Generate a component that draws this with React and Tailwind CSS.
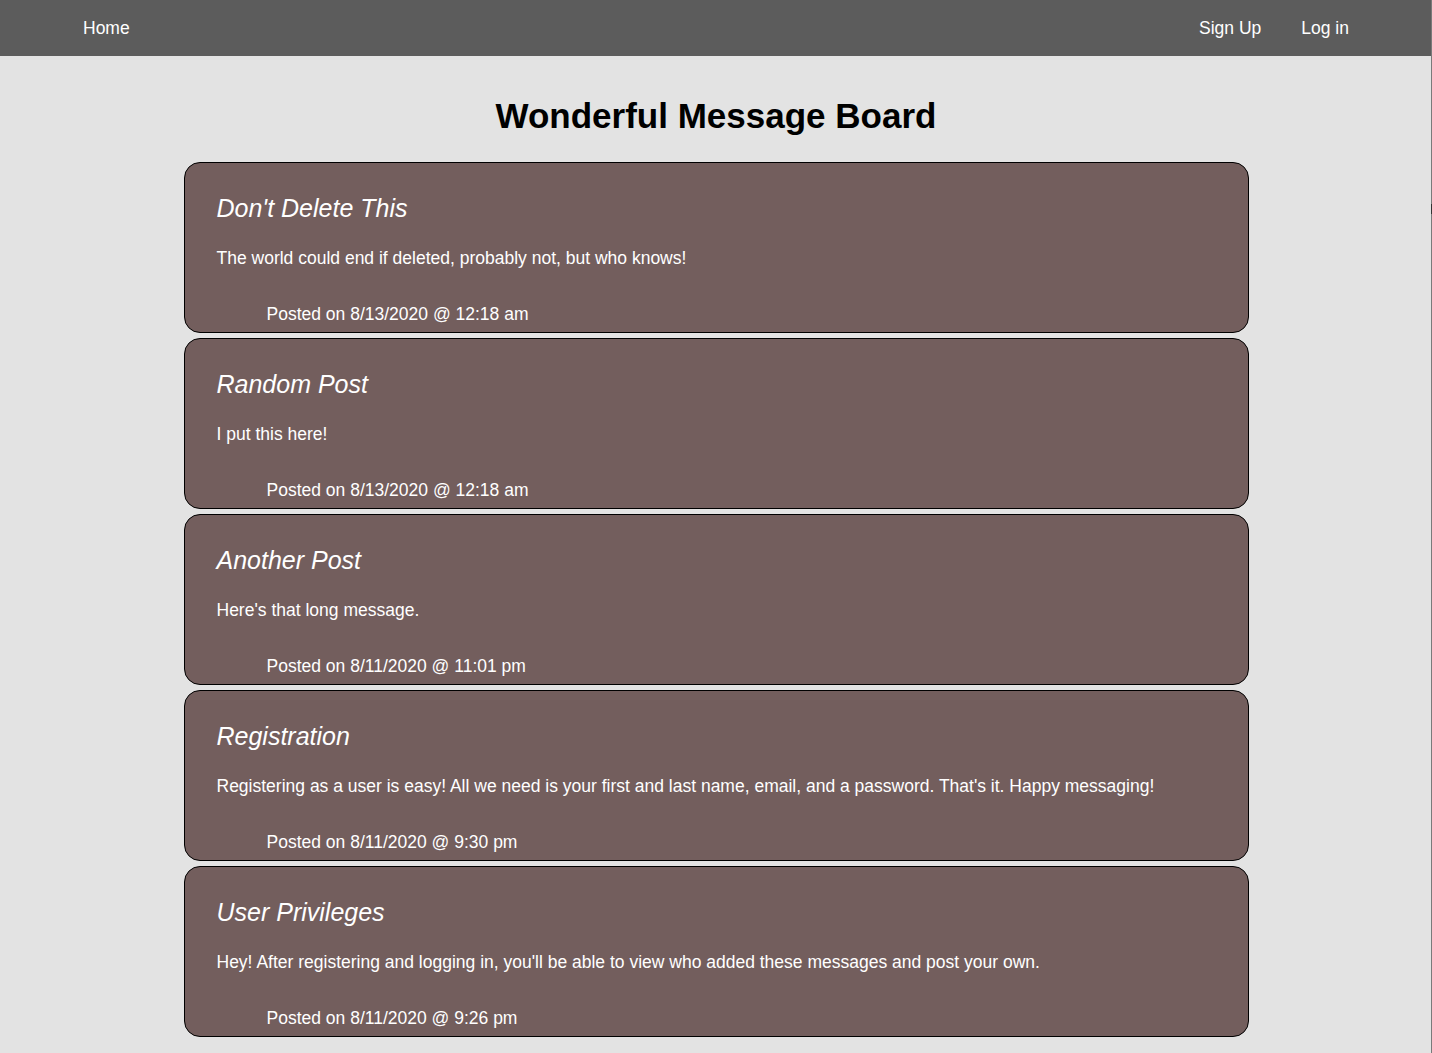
import React from 'react';

const POSTS = [
  {
    title: "Don't Delete This",
    body: 'The world could end if deleted, probably not, but who knows!',
    posted: '8/13/2020 @ 12:18 am',
  },
  {
    title: 'Random Post',
    body: 'I put this here!',
    posted: '8/13/2020 @ 12:18 am',
  },
  {
    title: 'Another Post',
    body: "Here's that long message.",
    posted: '8/11/2020 @ 11:01 pm',
  },
  {
    title: 'Registration',
    body: "Registering as a user is easy! All we need is your first and last name, email, and a password. That's it. Happy messaging!",
    posted: '8/11/2020 @ 9:30 pm',
  },
  {
    title: 'User Privileges',
    body: "Hey! After registering and logging in, you'll be able to view who added these messages and post your own.",
    posted: '8/11/2020 @ 9:26 pm',
  },
];

function PostCard({ post }) {
  return (
    <div className="rounded-2xl border border-black bg-[#735e5d] pt-[31px] pb-[8px] px-[32px] text-white">
      <h2 className="text-[25px] leading-[28px] italic font-normal">{post.title}</h2>
      <p className="mt-[26px] text-[17.5px] leading-[20px]">{post.body}</p>
      <p className="mt-[36px] ml-[50px] text-[17.5px] leading-[20px]">Posted on {post.posted}</p>
    </div>
  );
}

export default function App() {
  return (
    <div className="min-h-screen bg-[#e3e3e3] pb-4 font-['Liberation_Sans',Arial,sans-serif]">
      {/* Nav */}
      <nav className="h-14 bg-[#5c5c5c] px-[83px] flex items-center justify-between text-[17.5px] text-white">
        <a href="#">Home</a>
        <div className="flex items-center gap-10">
          <a href="#" className="ml-px">Sign Up</a>
          <a href="#">Log in</a>
        </div>
      </nav>

      <h1 className="mt-10 text-center text-[35px] leading-[40px] font-bold text-black">Wonderful Message Board</h1>

      <div className="mt-[26px] w-[1065px] mx-auto flex flex-col gap-[5px]">
        {POSTS.map((post, i) => (
          <PostCard key={i} post={post} />
        ))}
      </div>

      {/* thin scrollbar strip */}
      <div className="fixed right-0 top-0 h-full w-px bg-[#7a7a7a]">
        <div className="mt-[204px] h-[10px] w-px bg-[#333]" />
      </div>
    </div>
  );
}
